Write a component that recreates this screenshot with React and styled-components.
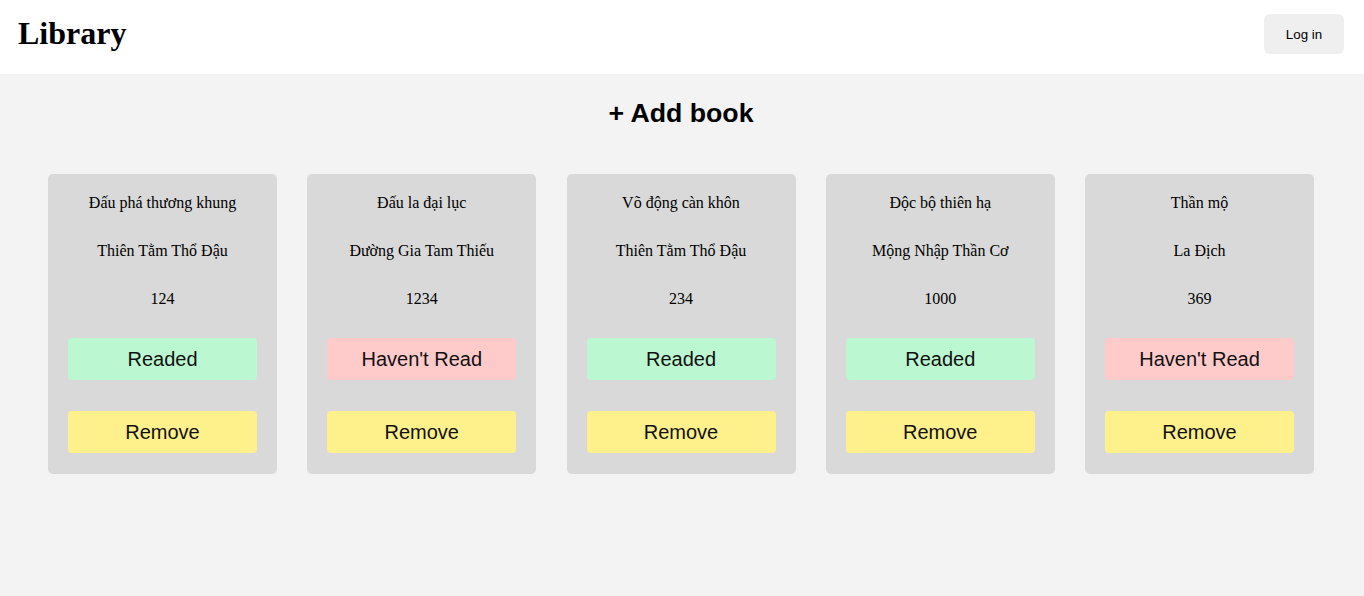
import styled, { createGlobalStyle } from 'styled-components';

const GlobalStyle = createGlobalStyle`
    body {
        margin: 0;
        background: #f3f3f3;
        font-family: "Liberation Serif", "Times New Roman", serif;
    }
`

const books = [
    { title: 'Đấu phá thương khung', author: 'Thiên Tằm Thổ Đậu', pages: 124, read: true },
    { title: 'Đấu la đại lục', author: 'Đường Gia Tam Thiếu', pages: 1234, read: false },
    { title: 'Võ động càn khôn', author: 'Thiên Tằm Thổ Đậu', pages: 234, read: true },
    { title: 'Độc bộ thiên hạ', author: 'Mộng Nhập Thần Cơ', pages: 1000, read: true },
    { title: 'Thần mộ', author: 'La Địch', pages: 369, read: false },
];

// top bar
const Header = styled.header`
    height: 74px;
    background: #ffffff;
    display: flex;
    justify-content: space-between;
    align-items: center;
    padding: 0 20px 0 18px;
    box-sizing: border-box;

    h1 {
        margin: 0;
        font-size: 32px;
        font-weight: 700;
        line-height: 1;
        margin-top: -8px;
    }
`

const LoginButton = styled.button`
    width: 80px;
    height: 40px;
    margin-top: -6px;
    border: none;
    border-radius: 6px;
    background: #efefef;
    color: #000;
    font-family: "Liberation Sans", Arial, sans-serif;
    font-size: 13.33px;
    cursor: pointer;
`

const Main = styled.main`
    display: flex;
    flex-direction: column;
    align-items: center;
    padding: 24px 50px 0 48px;
`

const AddBook = styled.button`
    border: none;
    background: transparent;
    padding: 0;
    height: 30px;
    font-family: "Liberation Sans", Arial, sans-serif;
    font-size: 26.7px;
    font-weight: 700;
    color: #000;
    cursor: pointer;
`

// card grid
const Grid = styled.div`
    width: 100%;
    margin-top: 46px;
    display: grid;
    grid-template-columns: repeat(5, 229px);
    justify-content: space-between;
`

const Card = styled.div`
    height: 300px;
    box-sizing: border-box;
    background: #d9d9d9;
    border-radius: 5px;
    padding: 20px;
    display: flex;
    flex-direction: column;
    gap: 30px;
    text-align: center;

    p {
        margin: 0;
        font-size: 16px;
        line-height: 18px;
    }
`

const ActionButton = styled.button`
    height: 42px;
    border: none;
    border-radius: 4px;
    background: ${(p) => p.$bg};
    font-family: "Liberation Sans", Arial, sans-serif;
    font-size: 20px;
    color: #111;
    cursor: pointer;

    & + & {
        margin-top: 1px;
    }
`

const App = () => {
    return (
        <>
            <GlobalStyle />
            <Header>
                <h1>Library</h1>
                <LoginButton>Log in</LoginButton>
            </Header>

            <Main>
                <AddBook>+ Add book</AddBook>

                <Grid>
                    {books.map((b) => (
                        <Card key={b.title}>
                            <p>{b.title}</p>
                            <p>{b.author}</p>
                            <p>{b.pages}</p>
                            <ActionButton $bg={b.read ? '#bbf7d0' : '#fecaca'}>
                                {b.read ? 'Readed' : "Haven't Read"}
                            </ActionButton>
                            <ActionButton $bg="#fef08a">Remove</ActionButton>
                        </Card>
                    ))}
                </Grid>
            </Main>
        </>
    );
}

export default App;
